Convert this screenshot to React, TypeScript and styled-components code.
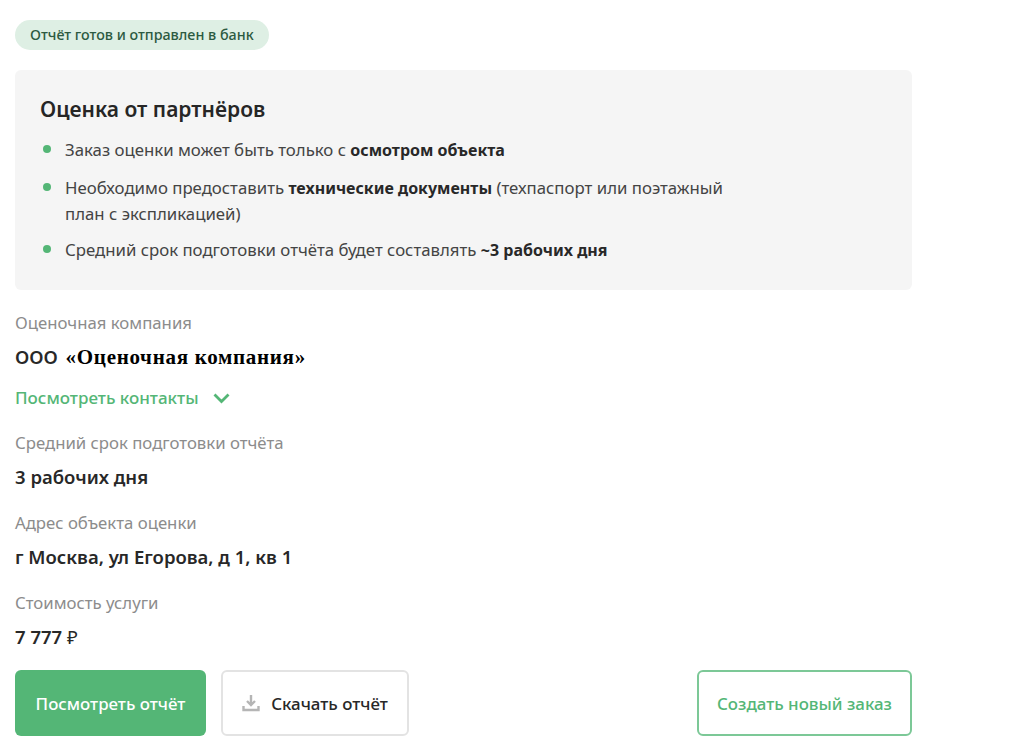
import React from "react";
import styled, { createGlobalStyle } from "styled-components";

const Global = createGlobalStyle`
  html, body { margin: 0; padding: 0; background: #fff; }
  body { font-family: "Noto Sans", "Open Sans", sans-serif; color: #282828; }
`;

const Page = styled.main`
  width: 897px;
  margin-left: 15px;
  padding-top: 20px;
  display: flex;
  flex-direction: column;
`;

const Badge = styled.div`
  align-self: flex-start;
  height: 30px;
  padding: 0 15px;
  border-radius: 15px;
  background: #deefe4;
  color: #2c5a41;
  font-size: 14.3px;
  font-weight: 500;
  line-height: 29px;
`;

const Card = styled.section`
  margin-top: 20px;
  height: 220px;
  box-sizing: border-box;
  padding: 25px 25px 0;
  background: #f5f5f5;
  border-radius: 6px;
`;

const Title = styled.h2`
  margin: 0 0 14px;
  font-size: 21px;
  font-weight: 600;
  line-height: 28px;
  color: #262626;
`;

const List = styled.ul`
  margin: 0;
  padding: 0;
  list-style: none;
  width: 710px;
  display: flex;
  flex-direction: column;
  gap: 11.5px;
`;

const Item = styled.li`
  position: relative;
  padding-left: 25px;
  font-size: 16.8px;
  line-height: 25px;
  color: #444;
  b { font-size: 16px; font-weight: 700; color: #282828; }
  &::before {
    content: "";
    position: absolute;
    left: 3px;
    top: 8px;
    width: 8px;
    height: 8px;
    border-radius: 50%;
    background: #54b676;
  }
`;

const Label = styled.div<{ $top?: number }>`
  margin-top: ${(p) => p.$top ?? 0}px;
  font-size: 16.75px;
  line-height: 24px;
  color: #8c8c8c;
`;

const Value = styled.div`
  margin-top: 10px;
  font-size: 18.5px;
  font-weight: 600;
  line-height: 24px;
  color: #282828;
`;

const SerifName = styled.span`
  margin-left: 3px;
  font-family: "Liberation Serif", serif;
  font-size: 21px;
  letter-spacing: 0.7px;
  font-weight: 700;
  color: #000;
`;

const Rouble = styled.span`
  font-weight: 400;
`;

const ContactsLink = styled.a`
  margin-top: 17px;
  display: flex;
  align-items: center;
  gap: 14px;
  font-size: 17px;
  font-weight: 500;
  line-height: 24px;
  color: #54b676;
`;

const Actions = styled.div`
  margin-top: 21px;
  display: flex;
  gap: 15px;
`;

const Button = styled.button<{ $variant: "primary" | "secondary" | "outline"; $width: number }>`
  width: ${(p) => p.$width}px;
  height: 66px;
  box-sizing: border-box;
  display: flex;
  align-items: center;
  justify-content: center;
  gap: 11px;
  border-radius: 6px;
  font-family: inherit;
  font-size: 16.9px;
  font-weight: 500;
  padding: 0;
  background: ${(p) => (p.$variant === "primary" ? "#54b676" : "#fff")};
  color: ${(p) => (p.$variant === "primary" ? "#fff" : p.$variant === "outline" ? "#54b676" : "#282828")};
  border: ${(p) =>
    p.$variant === "primary" ? "none" : p.$variant === "outline" ? "2px solid #7cc897" : "2px solid #e3e3e3"};
  &:last-child { margin-left: auto; }
`;

export default function App() {
  return (
    <>
      <Global />
      <Page>
        <Badge>Отчёт готов и отправлен в банк</Badge>
        <Card>
          <Title>Оценка от партнёров</Title>
          <List>
            <Item>
              Заказ оценки может быть только с <b>осмотром объекта</b>
            </Item>
            <Item>
              Необходимо предоставить <b>технические документы</b> (техпаспорт или поэтажный план с экспликацией)
            </Item>
            <Item>
              Средний срок подготовки отчёта будет составлять <b>~3 рабочих дня</b>
            </Item>
          </List>
        </Card>
        <Label $top={21}>Оценочная компания</Label>
        <Value>
          ООО <SerifName>«Оценочная компания»</SerifName>
        </Value>
        <ContactsLink>
          Посмотреть контакты
          <svg width="17" height="11" viewBox="0 0 17 11" fill="none">
            <path d="M1.5 1.5 8.5 8.5l7-7" stroke="#54b676" strokeWidth="2.8" />
          </svg>
        </ContactsLink>
        <Label $top={21}>Средний срок подготовки отчёта</Label>
        <Value>3 рабочих дня</Value>
        <Label $top={22}>Адрес объекта оценки</Label>
        <Value>г Москва, ул Егорова, д 1, кв 1</Value>
        <Label $top={22}>Стоимость услуги</Label>
        <Value>
          7 777 <Rouble>₽</Rouble>
        </Value>
        <Actions>
          <Button $variant="primary" $width={191}>Посмотреть отчёт</Button>
          <Button $variant="secondary" $width={188}>
            <svg width="18" height="18" viewBox="0 0 18 18" fill="none">
              <path d="M9 1v9M5 7l4 4 4-4" stroke="#b5b5b5" strokeWidth="2.4" />
              <path d="M1.5 12v4h15v-4" stroke="#b5b5b5" strokeWidth="2.4" />
            </svg>
            Скачать отчёт
          </Button>
          <Button $variant="outline" $width={215}>Создать новый заказ</Button>
        </Actions>
      </Page>
    </>
  );
}
